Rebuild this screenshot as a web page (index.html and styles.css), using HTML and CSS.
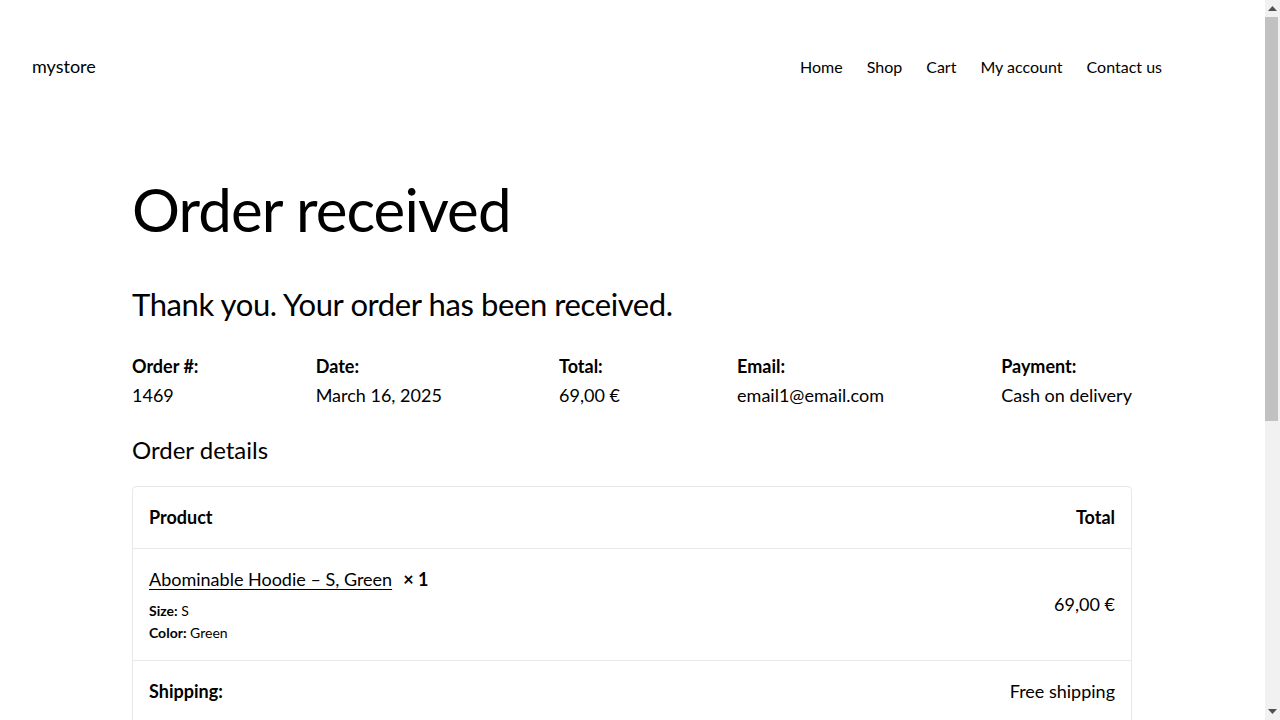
FILE: index.html
```html
<!DOCTYPE html>
<html lang="en">
<head>
<meta charset="utf-8">
<title>Order received – mystore</title>
<link rel="stylesheet" href="styles.css">
</head>
<body>
<div class="viewport">
  <div class="page">
    <header class="site-header">
      <a class="site-title" href="#">mystore</a>
      <nav class="site-nav">
        <a href="#">Home</a>
        <a href="#">Shop</a>
        <a href="#">Cart</a>
        <a href="#">My account</a>
        <a href="#">Contact us</a>
      </nav>
    </header>
    <main class="content">
      <h1 class="page-title">Order received</h1>
      <p class="thanks">Thank you. Your order has been received.</p>
      <ul class="overview">
        <li><span class="label">Order #:</span><span class="value">1469</span></li>
        <li><span class="label">Date:</span><span class="value">March 16, 2025</span></li>
        <li><span class="label">Total:</span><span class="value">69,00 €</span></li>
        <li><span class="label">Email:</span><span class="value">email1@email.com</span></li>
        <li><span class="label">Payment:</span><span class="value">Cash on delivery</span></li>
      </ul>
      <h2 class="section-title">Order details</h2>
      <div class="table-wrap">
        <table class="order-table">
          <thead>
            <tr><th class="col-product">Product</th><th class="col-total">Total</th></tr>
          </thead>
          <tbody>
            <tr>
              <td class="col-product">
                <div class="item-line"><a href="#" class="item-link">Abominable Hoodie – S, Green</a><strong class="qty">× 1</strong></div>
                <ul class="meta">
                  <li><strong>Size:</strong> S</li>
                  <li><strong>Color:</strong> Green</li>
                </ul>
              </td>
              <td class="col-total">69,00 €</td>
            </tr>
            <tr>
              <th class="col-product">Shipping:</th>
              <td class="col-total">Free shipping</td>
            </tr>
            <tr>
              <th class="col-product">Payment method:</th>
              <td class="col-total">Cash on delivery</td>
            </tr>
            <tr>
              <th class="col-product">Total:</th>
              <td class="col-total">69,00 €</td>
            </tr>
          </tbody>
        </table>
      </div>
      <h2 class="section-title">Billing address</h2>
      <address class="address">Jane Doe<br>Main Street 1<br>10115 Berlin<br>Germany</address>
    </main>
  </div>
  <div class="scrollbar" aria-hidden="true">
    <div class="sb-btn">
      <svg width="9" height="5" viewBox="0 0 9 5"><polygon points="0,5 9,5 4.5,0" fill="#505050"/></svg>
    </div>
    <div class="sb-track">
      <div class="sb-thumb"></div>
    </div>
    <div class="sb-btn">
      <svg width="9" height="5" viewBox="0 0 9 5"><polygon points="0,0 9,0 4.5,5" fill="#505050"/></svg>
    </div>
  </div>
</div>
</body>
</html>
```
FILE: styles.css
```css
html, body {
  margin: 0;
  padding: 0;
  height: 100%;
}
body {
  font-family: Lato, "Noto Sans", sans-serif;
  font-size: 18px;
  line-height: 1.6;
  color: #000;
  background: #fff;
  overflow: hidden;
}
.viewport {
  display: flex;
  height: 100%;
}
.page {
  flex: 1;
  min-width: 0;
  overflow-y: auto;
  scrollbar-width: none;
}
.scrollbar {
  width: 15px;
  flex: none;
  background: #f1f1f1;
  display: flex;
  flex-direction: column;
}
.sb-btn {
  height: 17px;
  display: flex;
  align-items: center;
  justify-content: center;
}
.sb-track {
  flex: 1;
  padding: 0 2px 0 0;
}
.sb-thumb {
  height: 404px;
  background: #c1c1c1;
}
a {
  color: inherit;
  text-decoration: none;
}
.site-header {
  display: flex;
  justify-content: space-between;
  align-items: center;
  padding: 52px 103px 0 32px;
}
.site-nav {
  display: flex;
  gap: 24px;
  font-size: 16px;
}
.content {
  box-sizing: border-box;
  max-width: 1001px;
  margin: 0 auto;
  padding: 90px 1px 200px 0;
}
.page-title {
  font-size: 60px;
  font-weight: 400;
  letter-spacing: -0.9px;
  line-height: 1.28;
  margin: 0;
}
.thanks {
  font-size: 31px;
  letter-spacing: -0.4px;
  line-height: 1.34;
  margin: 36px 0 0;
}
.overview {
  list-style: none;
  margin: 27px 0 0;
  padding: 0;
  display: flex;
  justify-content: space-between;
}
.overview li {
  display: flex;
  flex-direction: column;
}
.overview .label {
  font-weight: 700;
}
.section-title {
  font-size: 24px;
  font-weight: 400;
  line-height: 1.3;
  margin: 24px 0 0;
}
.table-wrap {
  margin-top: 21px;
  border: 1px solid #e8e8e8;
  border-radius: 4px;
}
.order-table {
  width: 100%;
  border-collapse: collapse;
}
.order-table th,
.order-table td {
  padding: 16px;
  text-align: left;
  vertical-align: middle;
  font-weight: 400;
}
.order-table thead th,
.order-table tbody th {
  font-weight: 700;
}
.order-table tbody td,
.order-table tbody th {
  border-top: 1px solid #e8e8e8;
}
.order-table .col-total {
  text-align: right;
}
.item-link {
  text-decoration: underline;
  text-underline-offset: 3px;
}
.qty {
  margin-left: 11px;
}
.meta {
  list-style: none;
  margin: 6px 0 0;
  padding: 0;
  font-size: 14px;
  line-height: 1.58;
}
.address {
  font-style: normal;
  margin-top: 16px;
}
```
